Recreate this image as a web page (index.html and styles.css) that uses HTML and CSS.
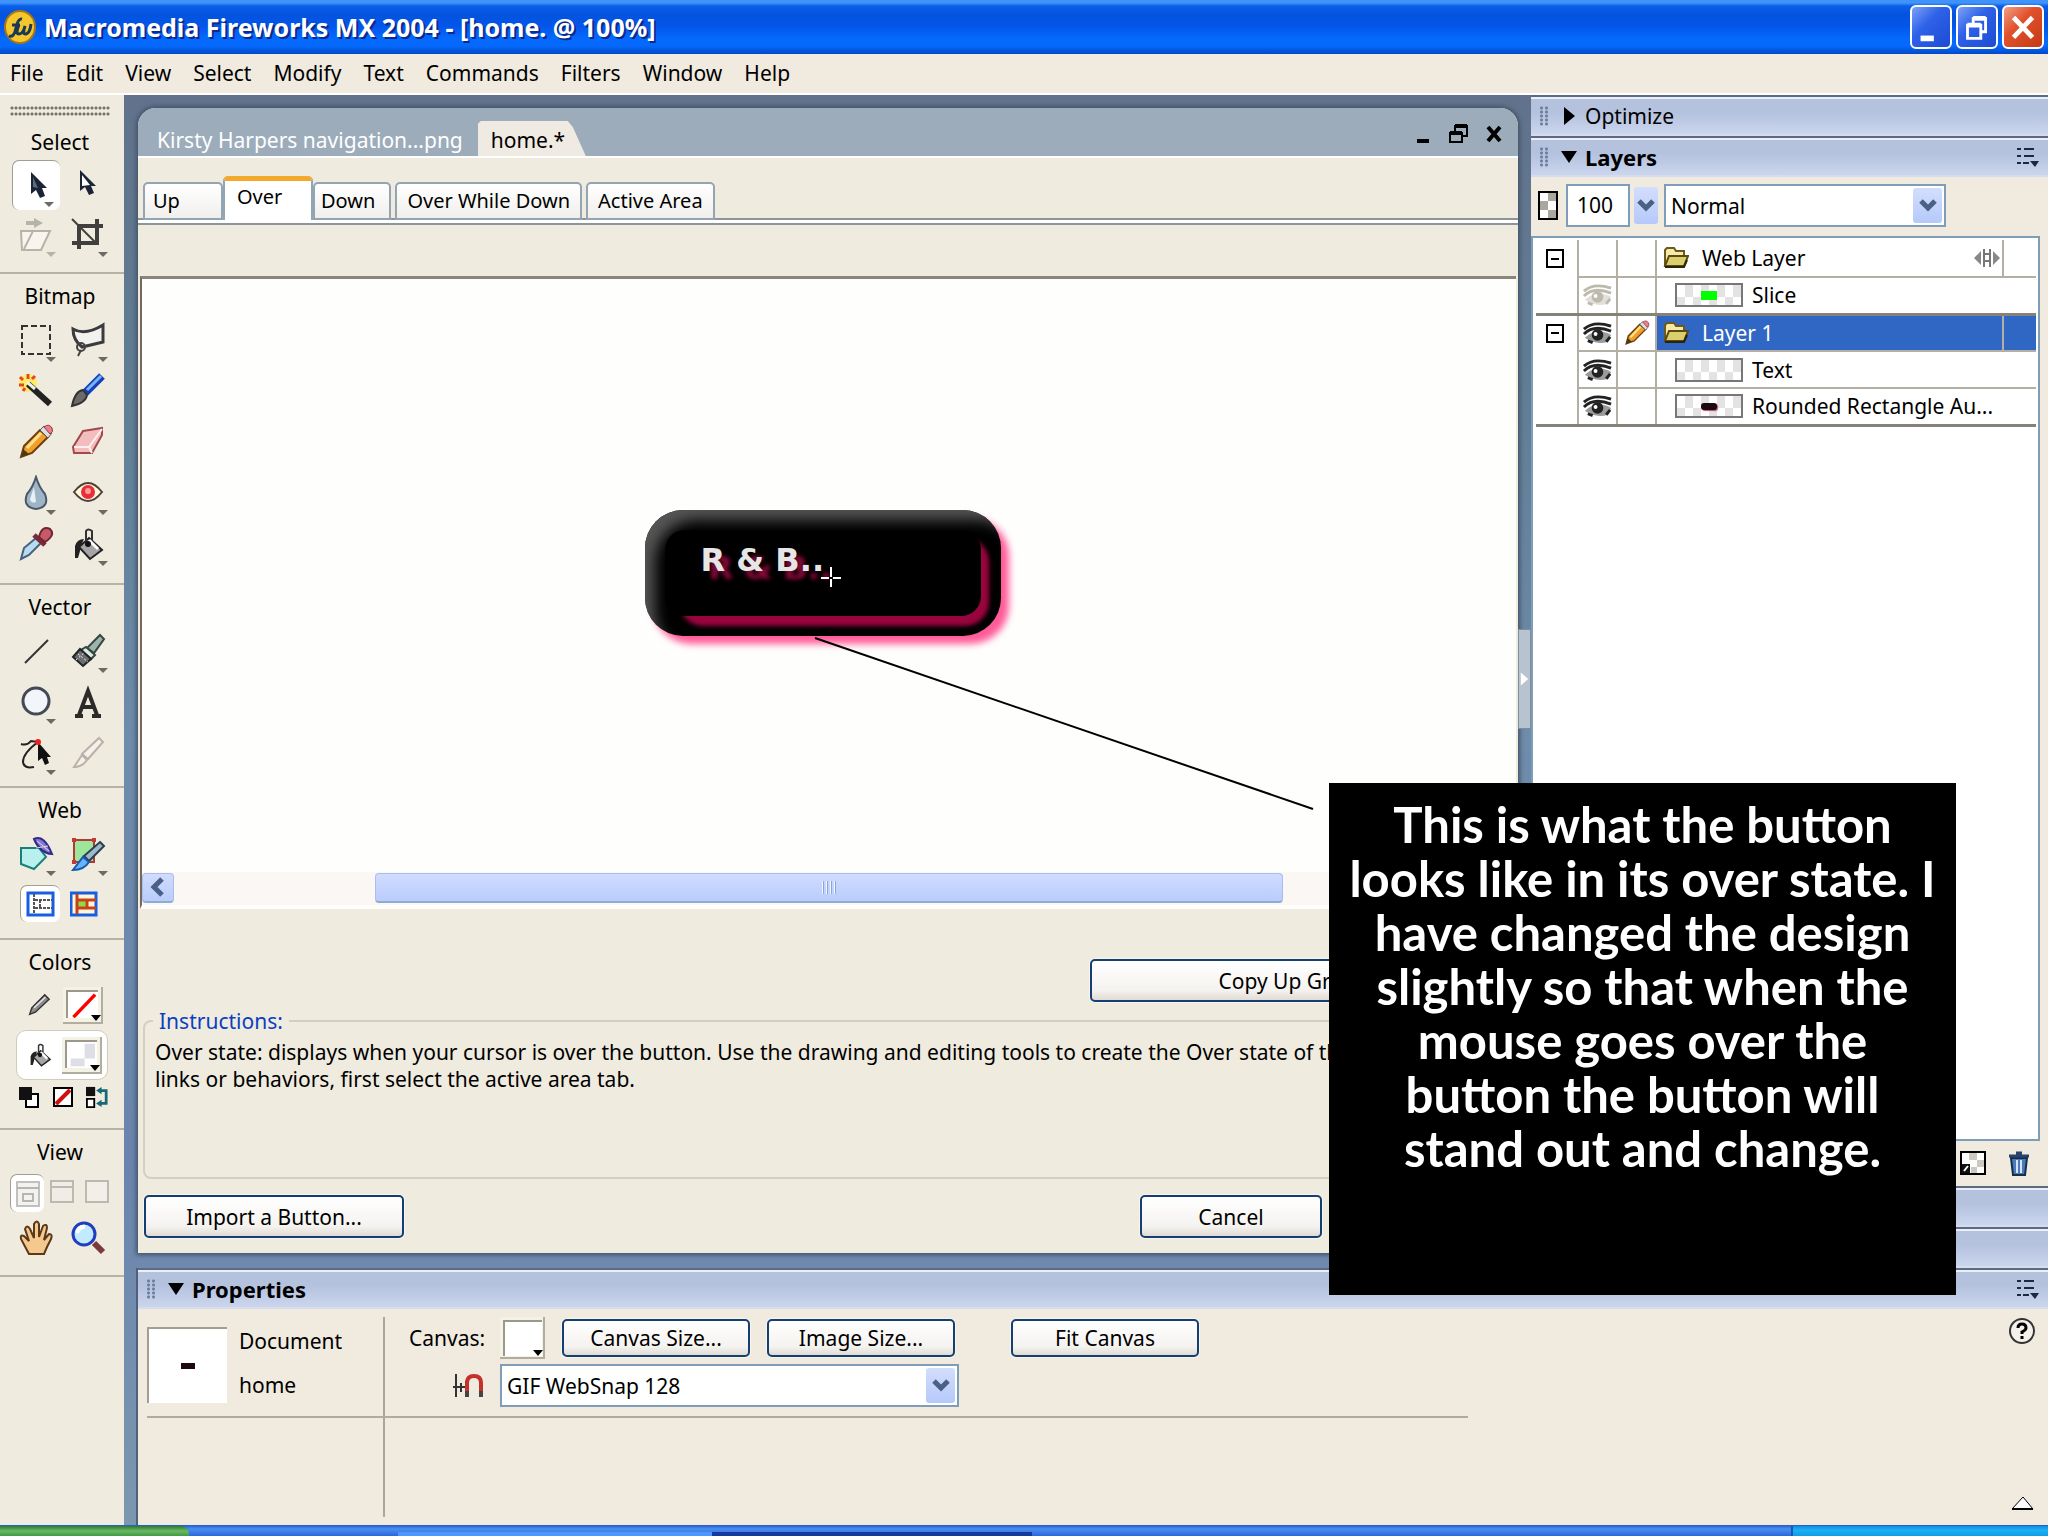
FILE: index.html
```html
<!DOCTYPE html>
<html lang="en">
<head>
    <meta charset="UTF-8">
    <meta name="viewport" content="width=device-width, initial-scale=1.0">
    <title>Macromedia Fireworks MX 2004</title>
    <link rel="stylesheet" href="styles.css">
</head>
<body>
    <!-- shared icons -->
    <svg class="defs" aria-hidden="true">
        <symbol id="chevron" viewBox="0 0 18 14"><path d="M2 2l7 7 7-7" fill="none" stroke="#4a6185" stroke-width="5"/></symbol>
        <symbol id="list-menu" viewBox="0 0 24 22"><path d="M1 3h4M1 10h4M1 17h4M8 3h10M8 10h10M7 17h6" stroke="#1c2740" stroke-width="2"/><path d="M14 15h9l-4 6z" fill="#1c2740"/></symbol>
        <symbol id="folder" viewBox="0 0 26 22"><path d="M2 19V3l2-2h7l2 3h8v5" fill="#f7e9a8" stroke="#6b5a1c" stroke-width="2"/><path d="M2 19L6 9h19l-4 10z" fill="#d9cf6d" stroke="#5d4a12" stroke-width="2"/><path d="M2 20h19l3-7" fill="none" stroke="#2e2208" stroke-width="2"/></symbol>
        <symbol id="eye" viewBox="0 0 32 24"><path d="M2 8Q12-1 30 5M2 13Q12 3 30 10" fill="none" stroke="currentColor" stroke-width="3"/><path d="M3 17Q15 5 30 14l-3 7Q14 25 3 17z" fill="currentColor" opacity=".45"/><circle cx="16" cy="14" r="6" fill="currentColor"/><circle cx="14" cy="13" r="2" fill="#fff"/><path d="M6 20l5 2M25 21l4-5" stroke="currentColor" stroke-width="3"/></symbol>
        <symbol id="pencil" viewBox="0 0 36 36"><path d="M3 33l3-11L22 6l8 7-16 16z" fill="#f0a02a" stroke="#6d3d0c" stroke-width="2"/><path d="M9 24L23 9" stroke="#ffdf8a" stroke-width="3"/><path d="M22 6l4-4 8 7-4 5z" fill="#dedee2" stroke="#555" stroke-width="1"/><path d="M26 3q5-4 8 1 2 4-2 6z" fill="#ee7d8c" stroke="#8c3944"/><path d="M3 33l2-8 6 5z" fill="#4a3a14"/></symbol>
        <symbol id="bucket" viewBox="0 0 36 36"><path d="M5 32V20q2-7 9-7l-3 7q-1 6-3 12z" fill="#222"/><path d="M19 12l13 12-12 9L9 21z" fill="#a5a5a8" stroke="#222" stroke-width="2"/><path d="M19 14l9 9" stroke="#fff" stroke-width="3"/><path d="M16 17V5q2-3 6 0v9" fill="none" stroke="#333" stroke-width="2"/><circle cx="18" cy="18" r="3" fill="#111"/></symbol>
    </svg>

    <header class="titlebar">
        <svg class="app-logo" viewBox="0 0 32 34"><ellipse cx="16" cy="17" rx="15" ry="16" fill="#f5c72f" stroke="#a87712" stroke-width="2"/><path d="M5 26q5 2 7-8t6-9M8 15h8M15 15q-4 9 0 9t6-8q-3 9 1 8t5-10" fill="none" stroke="#1b3a52" stroke-width="3"/></svg>
        <h1>Macromedia Fireworks MX 2004 - [home. @ 100%]</h1>
        <div class="window-buttons">
            <button aria-label="Minimize"><svg viewBox="0 0 40 42"><path d="M9 33h14" stroke="#fff" stroke-width="6"/></svg></button>
            <button aria-label="Restore"><svg viewBox="0 0 40 42"><path d="M10 19h14v14H10zM16 18v-6h13v14h-4" fill="none" stroke="#fff" stroke-width="3"/><path d="M10 19h14M16 12h13" stroke="#fff" stroke-width="5"/></svg></button>
            <button class="close" aria-label="Close"><svg viewBox="0 0 40 42"><path d="M10 11l20 21M30 11L10 32" stroke="#fff" stroke-width="5"/></svg></button>
        </div>
    </header>

    <nav class="menubar">
        <button>File</button>
        <button>Edit</button>
        <button>View</button>
        <button>Select</button>
        <button>Modify</button>
        <button>Text</button>
        <button>Commands</button>
        <button>Filters</button>
        <button>Window</button>
        <button>Help</button>
    </nav>

    <main class="app">
        <aside class="toolbar">
            <section class="tools tools-select">
                <div class="grip-wide"></div>
                <h2>Select</h2>
                <div class="tool-grid">
                    <button class="flyout pressed" aria-label="Pointer"><svg viewBox="0 0 36 36"><path d="M12 4v22l5-4 4 8 5-2-3-8h5z" fill="#1a2436"/><path d="M14 9v10l5 1z" fill="#5b6b7d"/></svg></button>
                    <button aria-label="Subselection"><svg viewBox="0 0 36 36"><path d="M10 3v21l5-4 4 8 5-2-3-7h5z" fill="#1a2436"/><path d="M12 8v11l8-1z" fill="#fff"/></svg></button>
                    <button class="flyout disabled" aria-label="Scale"><svg viewBox="0 0 36 36"><path d="M8 6h10" stroke="#b6b3a9" stroke-width="4"/><path d="M16 1l9 5-9 5z" fill="#b6b3a9"/><path d="M3 14h29l-9 19H4z" fill="#f7f5ee" stroke="#b6b3a9" stroke-width="2"/><path d="M15 14L6 32" stroke="#b6b3a9" stroke-width="2"/></svg></button>
                    <button class="flyout" aria-label="Crop"><svg viewBox="0 0 36 36"><path d="M9 32V9h24M2 26h25V2" fill="none" stroke="#413f3d" stroke-width="4"/><path d="M2 2l23 23" stroke="#413f3d" stroke-width="2"/></svg></button>
                </div>
            </section>
            <section class="tools tools-bitmap">
                <h2>Bitmap</h2>
                <div class="tool-grid">
                    <button class="flyout" aria-label="Marquee"><svg viewBox="0 0 36 36"><path d="M4 4h28v28H4z" fill="none" stroke="#333" stroke-width="2" stroke-dasharray="6 3"/></svg></button>
                    <button class="flyout" aria-label="Lasso"><svg viewBox="0 0 36 36"><path d="M3 7q12 7 30-4v17L12 25Q3 18 3 7z" fill="#f4f2ec" stroke="#3b3b3f" stroke-width="3"/><circle cx="11" cy="25" r="4" fill="none" stroke="#444" stroke-width="2"/><path d="M11 28l-3 6" stroke="#444" stroke-width="2"/></svg></button>
                    <button aria-label="Magic wand"><svg viewBox="0 0 36 36"><circle cx="10" cy="10" r="9" fill="#ffec62"/><path d="M10 1v5M2 4l3 3M1 12h5M5 18l2-3M17 3l-3 3" stroke="#e5452a" stroke-width="3"/><path d="M10 11l22 20" stroke="#222" stroke-width="6"/><path d="M9 9l8 7" stroke="#eee" stroke-width="3"/></svg></button>
                    <button aria-label="Brush"><svg viewBox="0 0 36 36"><path d="M15 20L32 3" stroke="#1740b8" stroke-width="8"/><path d="M17 17L31 3" stroke="#72b5ff" stroke-width="3"/><path d="M2 33q3-15 11-16l4 5q-1 8-15 11z" fill="#6c6a69" stroke="#333" stroke-width="2"/></svg></button>
                    <button aria-label="Pencil"><svg viewBox="0 0 36 36"><use href="#pencil"/></svg></button>
                    <button aria-label="Eraser"><svg viewBox="0 0 36 36"><path d="M13 7l19-3v7L22 29H4l-1-6z" fill="#f3bdbd" stroke="#a04a50" stroke-width="2"/><path d="M4 23h15L32 5M19 23l3 6" fill="none" stroke="#fff0ef" stroke-width="2"/></svg></button>
                    <button class="flyout" aria-label="Blur"><svg viewBox="0 0 36 36"><path d="M18 2q3 10 9 17 5 13-9 15-14-2-9-15 6-7 9-17z" fill="#9fb5c6" stroke="#48586a" stroke-width="2"/><path d="M16 12l-4 12q1 5 6 3z" fill="#e6f0f7"/></svg></button>
                    <button class="flyout" aria-label="Red eye removal"><svg viewBox="0 0 36 36"><path d="M4 17q14-18 28 0-14 18-28 0z" fill="#fff6dc" stroke="#4c403c" stroke-width="2"/><circle cx="18" cy="17" r="7" fill="#e82f38"/><circle cx="18" cy="16" r="3" fill="#ff9ca0"/></svg></button>
                    <button aria-label="Eyedropper"><svg viewBox="0 0 36 36"><path d="M3 33l3-11 12-10 5 5L11 29z" fill="#b7dcf2" stroke="#46627c" stroke-width="2"/><path d="M16 9l11 10" stroke="#7a2a36" stroke-width="5"/><path d="M21 11q3-12 11-8 6 6-5 13z" fill="#c85a68" stroke="#702632" stroke-width="2"/></svg></button>
                    <button class="flyout" aria-label="Paint bucket"><svg viewBox="0 0 36 36"><use href="#bucket"/></svg></button>
                </div>
            </section>
            <section class="tools">
                <h2>Vector</h2>
                <div class="tool-grid">
                    <button aria-label="Line"><svg viewBox="0 0 36 36"><path d="M7 30L30 7" stroke="#333" stroke-width="2"/></svg></button>
                    <button class="flyout" aria-label="Pen"><svg viewBox="0 0 36 36"><path d="M30 2l4 4-10 14-7-5z" fill="#9bb5ae" stroke="#36473f" stroke-width="2"/><path d="M16 14l9 8-4 4-10-9z" fill="#dcebe5" stroke="#36473f" stroke-width="2"/><path d="M10 16l11 10-8 7L3 24z" fill="#696e70" stroke="#222" stroke-width="2"/><path d="M8 21l10 8M6 27l8-7" stroke="#eee" stroke-dasharray="2 2"/></svg></button>
                    <button class="flyout" aria-label="Ellipse"><svg viewBox="0 0 36 36"><circle cx="18" cy="17" r="13" fill="#f2f5f9" stroke="#424952" stroke-width="3"/></svg></button>
                    <button aria-label="Text"><svg viewBox="0 0 36 36"><path d="M5 32h8M22 32h9M9 31l9-24 9 24M13 23h10" fill="none" stroke="#2d2b2a" stroke-width="4"/></svg></button>
                    <button class="flyout" aria-label="Freeform"><svg viewBox="0 0 36 36"><path d="M3 9q6 2 10-3l7 1Q5 18 5 27q1 7 11 5" fill="none" stroke="#222" stroke-width="2"/><path d="M20 7v19l4-3 3 7 4-2-2-6h4z" fill="#111"/><circle cx="20" cy="7" r="3" fill="#f02020"/></svg></button>
                    <button class="disabled" aria-label="Knife"><svg viewBox="0 0 36 36"><path d="M29 3l4 4-15 17-6-5zM12 20l5 5q-5 7-13 7z" fill="#f5f1ea" stroke="#b8b2a8" stroke-width="2"/></svg></button>
                </div>
            </section>
            <section class="tools tools-web">
                <h2>Web</h2>
                <div class="tool-grid">
                    <button class="flyout" aria-label="Hotspot"><svg viewBox="0 0 36 36"><path d="M3 12h18l7 9-12 12L3 28z" fill="#b9f0ee" stroke="#18807c" stroke-width="2"/><path d="M16 3q10-5 18 15-12-1-18-15z" fill="#8478d8" stroke="#342a8a" stroke-width="2"/><path d="M19 5l12 10M18 12l12-2" stroke="#ddd" stroke-width="1"/></svg></button>
                    <button class="flyout" aria-label="Slice"><svg viewBox="0 0 36 36"><path d="M4 4h20v22H4z" fill="#9ee69b" stroke="#b03a34" stroke-width="2"/><path d="M2 2h4v4H2zM22 2h4v4h-4zM2 24h4v4H2z" fill="#c03a34"/><path d="M30 6l4 4-15 15-5-5z" fill="#9db8c8" stroke="#29404f" stroke-width="2"/><path d="M13 21l6 5q-5 8-16 8z" fill="#66b4ff" stroke="#1759b0" stroke-width="2"/></svg></button>
                    <button class="pressed small" aria-label="Hide slices"><svg viewBox="0 0 36 36"><path d="M5 7h25v22H5z" fill="#fff" stroke="#175ee0" stroke-width="3"/><path d="M11 8v20M12 14h18M12 22h18M17 14v8" fill="none" stroke="#555" stroke-width="2" stroke-dasharray="3 1"/></svg></button>
                    <button aria-label="Show slices"><svg viewBox="0 0 36 36"><path d="M1 6h25v22H1z" fill="#fff6d8" stroke="#175ee0" stroke-width="3"/><path d="M7 13h10v8H7z" fill="#8de044"/><path d="M7 7v20M8 13h18M8 21h18M17 13v8" fill="none" stroke="#c8401c" stroke-width="3"/></svg></button>
                </div>
            </section>
            <section class="tools tools-colors">
                <h2>Colors</h2>
                <div class="color-row">
                    <svg class="color-icon" viewBox="0 0 36 36"><path d="M5 31l3-9L26 4l6 6-19 18z" fill="#8c8c8c" stroke="#333" stroke-width="2"/><path d="M11 22L27 7" stroke="#e6e6e6" stroke-width="2"/></svg>
                    <button class="swatch" aria-label="Stroke color"><svg viewBox="0 0 30 30"><path d="M4 29L29 3" stroke="#f00" stroke-width="4"/></svg></button>
                </div>
                <div class="color-row active">
                    <svg class="color-icon" viewBox="0 0 36 36"><use href="#bucket"/></svg>
                    <button class="swatch" aria-label="Fill color"><svg viewBox="0 0 30 30"><path d="M18 2h12v17H18zM2 19h16v9H2z" fill="#dedee6"/></svg></button>
                </div>
                <div class="mini-row">
                    <button aria-label="Default colors"><svg viewBox="0 0 20 22"><path d="M7 8h12v13H7z" fill="#fff" stroke="#000" stroke-width="2"/><path d="M0 1h13v13H0z" fill="#111"/></svg></button>
                    <button aria-label="No color"><svg viewBox="0 0 20 22"><path d="M1 2h18v18H1z" fill="#fff" stroke="#000" stroke-width="2"/><path d="M3 18L17 4" stroke="#d01010" stroke-width="4"/></svg></button>
                    <button aria-label="Swap colors"><svg viewBox="0 0 24 24"><path d="M0 1h10v10H0z" fill="#111"/><path d="M1 14h8v9H1z" fill="#fff" stroke="#000" stroke-width="2"/><path d="M14 5h8v14h-8" fill="none" stroke="#176878" stroke-width="3"/><path d="M11 5l6-4v8zM11 19l6-4v8z" fill="#176878"/></svg></button>
                </div>
            </section>
            <section class="tools tools-view">
                <h2>View</h2>
                <div class="mini-row view-modes">
                    <button class="pressed" aria-label="Standard screen"><svg viewBox="0 0 26 28"><path d="M2 2h22v24H2z" fill="#f3f2f0" stroke="#c2c0bb" stroke-width="2"/><path d="M2 8h22M8 14h10v7H8z" fill="none" stroke="#b7b5b0" stroke-width="2"/></svg></button>
                    <button aria-label="Full screen with menus"><svg viewBox="0 0 26 28"><path d="M2 2h22v21H2zM2 8h22" fill="#f0ece6" stroke="#bdb9b2" stroke-width="2"/></svg></button>
                    <button aria-label="Full screen"><svg viewBox="0 0 26 28"><path d="M2 2h22v21H2z" fill="#f3eee8" stroke="#bdb9b2" stroke-width="2"/></svg></button>
                </div>
                <div class="tool-grid">
                    <button aria-label="Hand"><svg viewBox="0 0 36 36"><path d="M11 34l-8-15q-1-5 3-3l5 5-4-12q2-5 5 0l4 9V4q3-5 5 0v13l4-11q4-3 4 2l-3 12 5-6q4 0 2 5l-4 8-3 7z" fill="#f5c890" stroke="#5a3818" stroke-width="2"/></svg></button>
                    <button aria-label="Zoom"><svg viewBox="0 0 36 36"><path d="M24 23l9 9" stroke="#7b3a3c" stroke-width="6"/><circle cx="14" cy="14" r="11" fill="#c3eaff" stroke="#203fc0" stroke-width="3"/><path d="M7 13q2-7 8-6" fill="none" stroke="#fff" stroke-width="4"/></svg></button>
                </div>
            </section>
        </aside>

        <div class="stage">
            <div class="workspace">
                <article class="document">
                    <div class="doc-tabs">
                        <button class="doc-tab">Kirsty Harpers navigation...png</button>
                        <button class="doc-tab current">home.*</button>
                        <div class="doc-buttons">
                            <button aria-label="Minimize document"><svg viewBox="0 0 22 22"><path d="M4 18h12" stroke="#000" stroke-width="4"/></svg></button>
                            <button aria-label="Restore document"><svg viewBox="0 0 22 22"><path d="M2 10h12v9H2zM7 9V3h12v10h-4" fill="none" stroke="#000" stroke-width="2"/><path d="M2 10h12M7 3h12" stroke="#000" stroke-width="4"/></svg></button>
                            <button aria-label="Close document"><svg viewBox="0 0 22 22"><path d="M5 4l12 14M17 4L5 18" stroke="#000" stroke-width="4"/></svg></button>
                        </div>
                    </div>
                    <div class="state-tabs">
                        <button>Up</button>
                        <button class="current">Over</button>
                        <button>Down</button>
                        <button>Over While Down</button>
                        <button>Active Area</button>
                    </div>
                    <div class="canvas">
                        <div class="nav-button">
                            <span>R &amp; B..</span>
                            <svg class="crosshair" viewBox="0 0 20 20"><path d="M10 0v20M0 11h20" stroke="#fff" stroke-width="2"/><path d="M8 11h4" stroke="#000" stroke-width="2"/></svg>
                        </div>
                    </div>
                    <div class="scrollbar">
                        <button class="scroll-arrow" aria-label="Scroll left"><svg viewBox="0 0 20 24"><path d="M14 4L6 12l8 8" fill="none" stroke="#4a6185" stroke-width="5"/></svg></button>
                        <div class="scroll-thumb"><i></i><i></i><i></i><i></i></div>
                    </div>
                    <div class="copy-row"><button class="xp-button">Copy Up Graphic</button></div>
                    <fieldset class="instructions">
                        <legend>Instructions:</legend>
                        <p>Over state: displays when your cursor is over the button. Use the drawing and editing tools to create the Over state of the button. To add<br>links or behaviors, first select the active area tab.</p>
                    </fieldset>
                    <div class="doc-actions">
                        <button class="xp-button">Import a Button...</button>
                        <button class="xp-button cancel">Cancel</button>
                    </div>
                </article>

                <button class="splitter" aria-label="Collapse panels"><svg viewBox="0 0 12 20"><path d="M2 3l8 7-8 7z" fill="#fff"/></svg></button>

                <aside class="panels">
                    <div class="panel-header">
                        <span class="grip"></span>
                        <svg class="arrow" viewBox="0 0 16 18"><path d="M3 0l11 9-11 9z"/></svg>
                        <h2 class="closed">Optimize</h2>
                    </div>
                    <div class="panel-header">
                        <span class="grip"></span>
                        <svg class="arrow" viewBox="0 0 16 18"><path d="M0 3h16L8 15z"/></svg>
                        <h2>Layers</h2>
                        <button class="menu-icon" aria-label="Layers options"><svg viewBox="0 0 24 22"><use href="#list-menu"/></svg></button>
                    </div>
                    <div class="layer-options">
                        <svg class="opacity-icon" viewBox="0 0 20 29"><path d="M1 1h18v27H1z" fill="#fff"/><path d="M10 2h8v8h-8zM2 10h8v9H2zM10 19h8v8h-8z" fill="#aaa79d"/><path d="M1 1h18v27H1z" fill="none" stroke="#000" stroke-width="2"/></svg>
                        <input type="text" class="opacity" value="100" aria-label="Opacity">
                        <button class="chevron-button" aria-label="Opacity slider"><svg viewBox="0 0 18 14"><use href="#chevron"/></svg></button>
                        <div class="select blend">
                            <select aria-label="Blend mode"><option>Normal</option></select>
                            <span class="select-arrow"><svg viewBox="0 0 18 14"><use href="#chevron"/></svg></span>
                        </div>
                    </div>
                    <div class="layer-list">
                        <table>
                            <colgroup><col class="c-toggle"><col class="c-eye"><col class="c-eye"><col><col class="c-end"></colgroup>
                            <tr>
                                <td><button class="toggle" aria-label="Collapse Web Layer"></button></td>
                                <td></td>
                                <td></td>
                                <td class="layer-name"><div><svg class="folder" viewBox="0 0 26 22"><use href="#folder"/></svg>Web Layer<svg class="share" viewBox="0 0 26 20"><path d="M7 3L0 10l7 7zM19 3l7 7-7 7z" fill="#888"/><path d="M10 1v18M16 1v18M10 6h6M10 13h6" stroke="#777" stroke-width="2"/></svg></div></td>
                                <td></td>
                            </tr>
                            <tr class="layer-end">
                                <td></td>
                                <td class="eye hidden-layer"><svg viewBox="0 0 32 24"><use href="#eye"/></svg></td>
                                <td></td>
                                <td class="object-name" colspan="2"><div><span class="thumb"><i class="green"></i></span>Slice</div></td>
                            </tr>
                            <tr class="selected">
                                <td><button class="toggle" aria-label="Collapse Layer 1"></button></td>
                                <td class="eye"><svg viewBox="0 0 32 24"><use href="#eye"/></svg></td>
                                <td class="pen"><svg viewBox="0 0 36 36"><use href="#pencil"/></svg></td>
                                <td class="layer-name"><div><svg class="folder" viewBox="0 0 26 22"><use href="#folder"/></svg>Layer 1</div></td>
                                <td></td>
                            </tr>
                            <tr>
                                <td></td>
                                <td class="eye"><svg viewBox="0 0 32 24"><use href="#eye"/></svg></td>
                                <td></td>
                                <td class="object-name" colspan="2"><div><span class="thumb"></span>Text</div></td>
                            </tr>
                            <tr class="layer-end">
                                <td></td>
                                <td class="eye"><svg viewBox="0 0 32 24"><use href="#eye"/></svg></td>
                                <td></td>
                                <td class="object-name" colspan="2"><div><span class="thumb"><i class="dark"></i></span>Rounded Rectangle Au...</div></td>
                            </tr>
                        </table>
                    </div>
                    <div class="layer-footer">
                        <button aria-label="New bitmap image"><svg viewBox="0 0 26 26"><path d="M1 2h24v22H1z" fill="#fff" stroke="#000" stroke-width="2"/><path d="M9 3h8v7H9zM17 10h7v7h-7zM11 17h6v6h-6z" fill="#ccc9c0"/><path d="M2 14h8v9H2z" fill="#111"/><path d="M4 21l4-5" stroke="#fff" stroke-width="2"/></svg></button>
                        <button aria-label="Delete selection"><svg viewBox="0 0 26 26"><path d="M5 8h16l-2 17H7z" fill="#4a7ab8" stroke="#182c4c" stroke-width="2"/><path d="M11 10v13M15 10v13" stroke="#d4e4f5" stroke-width="2"/><path d="M3 6h20M10 3h6" stroke="#28446c" stroke-width="3"/></svg></button>
                    </div>
                    <div class="panel-header"></div>
                    <div class="panel-header"></div>
                </aside>

                <!-- callout on top of the screen -->
                <svg class="callout-line" viewBox="0 0 500 174"><path d="M1 1l498 171" stroke="#000" stroke-width="2"/></svg>
                <div class="callout">
                    <p>This is what the button<br>looks like in its over state. I<br>have changed the design<br>slightly so that when the<br>mouse goes over the<br>button the button will<br>stand out and change.</p>
                </div>
            </div>

            <section class="properties">
                <div class="panel-header">
                    <span class="grip"></span>
                    <svg class="arrow" viewBox="0 0 16 18"><path d="M0 3h16L8 15z"/></svg>
                    <h2>Properties</h2>
                    <button class="menu-icon" aria-label="Properties options"><svg viewBox="0 0 24 22"><use href="#list-menu"/></svg></button>
                </div>
                <div class="properties-body">
                    <div class="doc-info">
                        <div class="doc-thumb"><i></i></div>
                        <div class="doc-labels">
                            <span>Document</span>
                            <span>home</span>
                        </div>
                    </div>
                    <div class="doc-settings">
                        <span class="row-label">Canvas:</span>
                        <div class="settings-row">
                            <button class="swatch canvas-swatch" aria-label="Canvas color"></button>
                            <button class="xp-button">Canvas Size...</button>
                            <button class="xp-button">Image Size...</button>
                            <button class="xp-button fit">Fit Canvas</button>
                        </div>
                        <label class="row-label" for="preset" aria-label="Export preset"><svg viewBox="0 0 32 24"><path d="M3 0v23M0 13h16M8 9v9M13 7v11" stroke="#333" stroke-width="2"/><path d="M14 21V9q0-7 7-7t7 7v12" fill="none" stroke="#c4302b" stroke-width="4"/><path d="M14 17v6M28 17v6" stroke="#444" stroke-width="4"/></svg></label>
                        <div class="select preset">
                            <select id="preset"><option>GIF WebSnap 128</option></select>
                            <span class="select-arrow"><svg viewBox="0 0 18 14"><use href="#chevron"/></svg></span>
                        </div>
                    </div>
                    <div class="properties-side">
                        <button aria-label="Help"><svg viewBox="0 0 28 28"><circle cx="14" cy="14" r="12" fill="#f4f1ec" stroke="#333" stroke-width="2"/><path d="M10 11q0-4 4-4t4 4q0 2-4 4v2M14 19v3" fill="none" stroke="#000" stroke-width="3"/></svg></button>
                        <button aria-label="Collapse"><svg viewBox="0 0 28 28"><path d="M4 20L15 8l10 12z" fill="#fff" stroke="#000" stroke-width="1"/><path d="M4 20h21" stroke="#000" stroke-width="2"/></svg></button>
                    </div>
                    <hr>
                </div>
            </section>
        </div>
    </main>

    <footer class="taskbar">
        <div class="start"></div>
        <div class="task"></div>
        <div class="task active-task"></div>
        <div class="tray"></div>
    </footer>
</body>
</html>
```
FILE: styles.css
```css
* {
    box-sizing: border-box;
}

body {
    margin: 0;
    min-height: 100vh;
    display: flex;
    flex-direction: column;
    background: #efebdf;
    color: #000;
    font-family: 'Noto Sans', Tahoma, sans-serif;
    font-size: 21px;
    line-height: 28px;
}

h1, h2, p {
    margin: 0;
}

button {
    padding: 0;
    border: 0;
    background: none;
    color: inherit;
    font: inherit;
}

svg {
    display: block;
    flex: none;
}

.defs {
    position: absolute;
    width: 0;
    height: 0;
}

/* title bar */

.titlebar {
    height: 54px;
    flex: none;
    display: flex;
    align-items: center;
    padding: 0 4px;
    background: linear-gradient(#3f93fb 0, #3f93fb 3px, #0a5fe8 6px, #0453df 14px, #0455ea 26px, #0469fc 38px, #0469fc 46px, #0348c8 54px);
}

.app-logo {
    width: 32px;
    height: 34px;
}

.titlebar h1 {
    flex: 1;
    padding-left: 8px;
    color: #fff;
    font-size: 25px;
    line-height: 32px;
    text-shadow: 2px 2px 0 #0c2a8c;
}

.window-buttons {
    display: flex;
    gap: 4px;
}

.window-buttons button {
    width: 42px;
    height: 44px;
    border: 2px solid #fff;
    border-radius: 6px;
    background: linear-gradient(135deg, #7da2f8, #2e62e8 40%, #1c4bd2);
}

.window-buttons .close {
    background: linear-gradient(135deg, #f0a088, #e2512c 40%, #c23a14);
}

.window-buttons svg {
    width: 38px;
    height: 40px;
}

/* menu */

.menubar {
    height: 41px;
    flex: none;
    display: flex;
    align-items: center;
    gap: 22px;
    padding: 0 10px 2px;
    background: #f0eadf;
    border-bottom: 2px solid #fff;
}

.app {
    flex: 1;
    display: flex;
}

/* tools */

.toolbar {
    width: 124px;
    flex: none;
    background: #efebde;
}

.tools {
    padding: 8px 10px;
    border-bottom: 2px solid #b7b3a2;
}

.tools h2 {
    margin: 0 4px 4px 0;
    font-size: 21px;
    font-weight: normal;
    text-align: center;
}

.tools-select {
    padding-bottom: 12px;
}

.tools-bitmap {
    padding-bottom: 14px;
}

.grip-wide {
    height: 11px;
    margin: 2px 4px 12px 0;
    background: radial-gradient(circle, #77746b 1px, transparent 2px) 0 0 / 4px 6px;
}

.tool-grid {
    display: grid;
    grid-template-columns: 52px 52px;
    grid-auto-rows: 51px;
}

.tools-select .tool-grid {
    grid-auto-rows: 50px;
}

.tool-grid button {
    position: relative;
    display: grid;
    place-items: center;
}

.tool-grid svg {
    width: 36px;
    height: 36px;
}

.flyout::after {
    content: "";
    position: absolute;
    right: 6px;
    bottom: 3px;
    border: 5px solid transparent;
    border-top-color: #6e6a62;
    border-bottom: 0;
}

.flyout.disabled::after {
    border-top-color: #b8b4aa;
}

.pressed {
    background: #fff;
    border-radius: 7px;
    border-left: 1px solid #a29e92;
    border-top: 1px solid #a29e92;
}

.tool-grid .pressed {
    margin: 0 2px;
}

.tool-grid .small {
    margin: 6px 2px 8px 10px;
}

.tools-colors {
    padding-bottom: 20px;
}

.color-row {
    height: 50px;
    display: flex;
    align-items: center;
    justify-content: space-between;
    margin: 0 6px;
    padding: 0 5px 0 10px;
}

.color-row.active {
    background: #fff;
    border: 1px solid #cfcbbd;
    border-radius: 10px;
}

.color-icon {
    width: 26px;
    height: 30px;
}

.swatch {
    position: relative;
    width: 40px;
    height: 37px;
    padding: 3px;
    background: #f4f1e5;
    border-right: 2px solid #b2ae9f;
    border-bottom: 2px solid #b2ae9f;
}

.swatch svg,
.canvas-swatch::before {
    width: 32px;
    height: 28px;
    background: #fff;
    border-left: 2px solid #9c988c;
    border-top: 2px solid #9c988c;
}

.swatch::after {
    content: "";
    position: absolute;
    right: 0;
    bottom: 1px;
    border: 5px solid transparent;
    border-top: 6px solid #000;
    border-bottom: 0;
}

.mini-row {
    display: flex;
    justify-content: space-between;
    margin: 6px 6px 0 8px;
}

.mini-row svg {
    width: 22px;
    height: 22px;
}

.tools-view {
    padding-bottom: 12px;
}

.view-modes {
    height: 38px;
    margin: 8px 0 0;
}

.view-modes button {
    width: 34px;
    display: grid;
    place-items: center;
}

.view-modes svg {
    width: 26px;
    height: 28px;
}

/* document window */

.stage {
    flex: 1;
    min-width: 0;
    display: flex;
    flex-direction: column;
    background: linear-gradient(#62728c, #5f7d93 20%, #6e8cab 45%, #6a84ad 75%, #7a98ae);
}

.workspace {
    position: relative;
    flex: 1;
    display: flex;
}

.document {
    flex: 1;
    min-width: 0;
    display: flex;
    flex-direction: column;
    margin: 13px 0 15px 14px;
    background: #efebdf;
    border-radius: 18px 18px 0 0;
    box-shadow: 0 0 4px 2px #44546a;
}

.doc-tabs {
    height: 50px;
    display: flex;
    align-items: flex-end;
    background: #9cacbb;
    border-bottom: 2px solid #fff;
    border-radius: 18px 18px 0 0;
}

.doc-tab {
    height: 35px;
    padding: 3px 15px 0 19px;
    color: #fff;
}

.doc-tab.current {
    width: 108px;
    padding: 3px 0 0 13px;
    color: #000;
    text-align: left;
    background: #f0ebe2;
    clip-path: polygon(0 3px, 3px 0, 90px 0, 95px 6px, 108px 100%, 0 100%);
}

.doc-buttons {
    display: flex;
    gap: 13px;
    margin: 0 13px 11px auto;
}

.doc-buttons svg {
    width: 22px;
    height: 22px;
}

.state-tabs {
    display: flex;
    align-items: flex-end;
    height: 67px;
    padding: 0 5px 5px;
    font-size: 20px;
    background: linear-gradient(transparent 60px, #8e9597 60px, #8e9597 62px, #fff 62px, #fff 65px, #8e9597 65px);
}

.state-tabs button {
    height: 38px;
    padding: 0 10px;
    margin-right: 4px;
    background: linear-gradient(#fff, #f1efec);
    border: 2px solid #93a5b3;
    border-radius: 5px 5px 0 0;
}

.state-tabs button:first-child {
    width: 80px;
    margin-right: 0;
    padding-left: 8px;
    text-align: left;
}

.state-tabs .current {
    width: 90px;
    height: 44px;
    margin-right: 0;
    padding: 0 0 8px 12px;
    text-align: left;
    background: #fff;
    border-top: 5px solid #f3a92b;
    border-bottom: 0;
}

.state-tabs .current + button {
    padding: 0 14px 0 6px;
}

.canvas {
    flex: 1;
    display: grid;
    place-items: center;
    margin: 51px 2px 0;
    padding: 0 13px 5px 0;
    background: #fefefd;
    border-top: 3px solid #8a857b;
    border-left: 2px solid #75685c;
}

.nav-button {
    position: relative;
    z-index: 0;
    width: 356px;
    height: 126px;
    padding: 28px 56px;
    border-radius: 38px;
    color: #e6e6e6;
    font-family: 'DejaVu Sans', sans-serif;
    font-size: 32px;
    font-weight: bold;
    line-height: 44px;
    text-shadow: 8px 8px 4px #8c0a3c;
    background: #000;
    box-shadow: inset 14px 14px 14px -4px #555, 8px 8px 7px #ff5c98;
}

/* pink bevel behind the black face */
.nav-button::before,
.nav-button::after {
    content: "";
    position: absolute;
    z-index: -1;
}

.nav-button::before {
    inset: 28px 12px 10px 34px;
    border-radius: 24px;
    background: #98043d;
    filter: blur(2px);
}

.nav-button::after {
    inset: 20px;
    border-radius: 20px;
    background: #000;
}

.nav-button .crosshair {
    position: absolute;
    left: 176px;
    top: 57px;
    width: 20px;
    height: 20px;
}

.scrollbar {
    display: flex;
    align-items: center;
    height: 37px;
    margin: 0 2px;
    padding-bottom: 2px;
    background: #faf7f4;
    border-left: 2px solid #75685c;
    border-bottom: 4px solid #fff;
}

.scroll-arrow,
.scroll-thumb {
    height: 30px;
    background: linear-gradient(#d0dcff, #b9ccfb);
    border: 1px solid #a8bfee;
    border-bottom: 2px solid #8eaccc;
    border-radius: 4px;
}

.scroll-arrow {
    width: 32px;
    padding-left: 5px;
}

.scroll-arrow svg {
    width: 20px;
    height: 24px;
}

.scroll-thumb {
    width: 908px;
    margin-left: 201px;
    display: flex;
    align-items: center;
    justify-content: center;
    gap: 2px;
}

.scroll-thumb i {
    width: 2px;
    height: 13px;
    background: #f2f6ff;
    border-right: 1px solid #8ba5dc;
}

.xp-button {
    height: 43px;
    background: linear-gradient(#fff, #f5f3f0 75%, #e0dcd4);
    border: 2px solid #153f70;
    border-radius: 5px;
    box-shadow: 0 0 0 1px #f7f5ef;
}

.copy-row {
    display: flex;
    justify-content: flex-end;
    padding: 50px 6px 5px;
}

.copy-row .xp-button {
    width: 422px;
}

.instructions {
    min-width: 0;
    height: 172px;
    margin: 0 5px;
    padding: 4px 10px;
    border: 2px solid #d4d0bf;
    border-radius: 8px;
}

.instructions legend {
    margin-left: -2px;
    padding: 0 6px;
    color: #0b3fc0;
}

.instructions p {
    line-height: 27px;
    white-space: nowrap;
}

.doc-actions {
    display: flex;
    justify-content: space-between;
    padding: 16px 196px 15px 6px;
}

.doc-actions .xp-button {
    width: 260px;
}

.doc-actions .cancel {
    width: 182px;
}

.splitter {
    width: 13px;
    height: 100px;
    flex: none;
    margin-top: 534px;
    background: #b8c3d0;
    border: 1px solid #7f8c9c;
}

.splitter svg {
    width: 11px;
    height: 20px;
}

/* panels */

.panels {
    width: 517px;
    flex: none;
    display: flex;
    flex-direction: column;
    background: #f0eadf;
}

.panel-header {
    height: 41px;
    flex: none;
    display: flex;
    align-items: center;
    padding: 0 8px 2px;
    background: linear-gradient(#b5c2de 40%, #cdd8ef);
    border-top: 2px solid #5c6b84;
    box-shadow: inset 0 2px #e9eef8, inset 0 -2px #d5dcec;
}

.panel-header h2 {
    padding-left: 8px;
    font-size: 22px;
}

.panel-header .closed {
    font-size: 21px;
    font-weight: normal;
}

.grip {
    width: 10px;
    height: 20px;
    background: radial-gradient(circle, #6d7d9c 1px, transparent 2px) 0 0 / 5px 4px;
}

.arrow {
    width: 16px;
    height: 18px;
    margin-left: 12px;
}

.menu-icon {
    margin-left: auto;
}

.menu-icon svg {
    width: 24px;
    height: 22px;
}

.layer-options {
    display: flex;
    align-items: center;
    padding: 7px 7px 9px;
}

.opacity-icon {
    width: 20px;
    height: 29px;
}

.opacity {
    width: 64px;
    height: 43px;
    margin: 0 4px 0 8px;
    padding: 0 0 2px 9px;
    border: 2px solid #7f9db9;
    background: #fff;
    font: inherit;
}

.chevron-button,
.select-arrow {
    display: grid;
    place-items: center;
    background: linear-gradient(#d3defd, #b5c9f9);
    border-radius: 3px;
}

.chevron-button {
    width: 24px;
    height: 37px;
    margin-right: 6px;
}

.chevron-button svg,
.select-arrow svg {
    width: 18px;
    height: 14px;
}

.select {
    position: relative;
}

.select select {
    width: 100%;
    height: 43px;
    padding: 0 5px;
    appearance: none;
    background: #fff;
    border: 2px solid #7f9db9;
    border-radius: 0;
    color: #000;
    font: inherit;
}

.select-arrow {
    position: absolute;
    top: 4px;
    right: 4px;
    bottom: 4px;
    width: 29px;
    pointer-events: none;
}

.blend {
    width: 282px;
}

.layer-list {
    flex: 1;
    margin-right: 8px;
    padding: 2px 2px 2px 3px;
    background: #fff;
    border: 2px solid #7f9db9;
}

.layer-list table {
    width: 100%;
    table-layout: fixed;
    border-collapse: collapse;
}

.layer-list td {
    height: 37px;
    padding: 0;
    border-left: 2px solid #b3afa4;
    border-bottom: 2px solid #b3afa4;
}

.layer-list td:first-child {
    border-left: 0;
    border-bottom: 0;
}

.layer-list .layer-end td {
    border-bottom: 3px solid #85827a;
}

.c-toggle {
    width: 42px;
}

.c-eye {
    width: 39px;
}

.c-end {
    width: 33px;
}

.toggle {
    display: block;
    width: 18px;
    height: 19px;
    margin-left: 10px;
    border: 2px solid #000;
    background: linear-gradient(#000, #000) center / 8px 2px no-repeat;
}

.layer-name div,
.object-name div {
    display: flex;
    align-items: center;
}

.layer-name div {
    padding: 0 2px 0 6px;
}

.object-name div {
    padding-left: 18px;
}

.folder {
    width: 26px;
    height: 22px;
    margin-right: 13px;
}

.share {
    width: 26px;
    height: 20px;
    margin-left: auto;
}

.selected td:nth-child(n+4) {
    background: #3167c4;
    color: #fff;
}

.eye svg {
    width: 31px;
    height: 24px;
    margin-left: 3px;
    color: #222;
}

.hidden-layer svg {
    color: #bdbaad;
}

.pen svg {
    width: 26px;
    height: 30px;
    margin-left: 6px;
}

.thumb {
    width: 68px;
    height: 24px;
    display: grid;
    place-items: center;
    margin-right: 9px;
    border: 2px solid #777;
    background: repeating-conic-gradient(#e4e2e2 0 25%, #fff 0 50%) 0 0 / 16px 24px;
}

.thumb i {
    width: 16px;
    height: 9px;
}

.thumb .green {
    background: #0f0;
}

.thumb .dark {
    height: 7px;
    background: #1c0a10;
    border-radius: 3px;
    box-shadow: 1px 1px 1px #c04a70;
}

.layer-footer {
    display: flex;
    justify-content: flex-end;
    gap: 20px;
    padding: 9px 16px 10px 0;
}

.layer-footer svg {
    width: 26px;
    height: 26px;
}

/* callout */

.callout {
    position: absolute;
    left: 1205px;
    top: 688px;
    width: 627px;
    height: 512px;
    padding-top: 14px;
    background: #000;
    color: #fff;
    font-family: Lato, sans-serif;
    font-size: 49px;
    font-weight: bold;
    line-height: 54px;
    text-align: center;
    z-index: 1;
}

.callout-line {
    position: absolute;
    left: 690px;
    top: 542px;
    width: 500px;
    height: 174px;
}

/* properties */

.properties {
    flex: none;
    margin-left: 14px;
    background: #f0eadf;
    box-shadow: -2px 0 #4f6078;
}

.properties-body {
    display: grid;
    grid-template-columns: 236px 1fr auto;
    grid-template-rows: 99px 101px;
    padding: 8px 12px 8px 9px;
}

.doc-info {
    grid-column: 1;
    grid-row: 1 / 3;
    display: flex;
    gap: 12px;
    padding-top: 10px;
}

.doc-thumb {
    width: 80px;
    height: 76px;
    display: grid;
    place-items: center;
    background: #fff;
    border-left: 2px solid #a29e92;
    border-top: 2px solid #a29e92;
}

.doc-thumb i {
    width: 14px;
    height: 6px;
    background: #1c0a10;
}

.doc-labels span {
    display: block;
    margin-bottom: 16px;
}

.doc-settings {
    display: grid;
    grid-template-columns: 91px 1fr;
    grid-template-rows: 42px 43px;
    gap: 5px 0;
    padding-left: 26px;
    align-items: center;
}

.doc-settings,
.properties-body::before {
    grid-column: 2;
    grid-row: 1;
}

.properties-body::before {
    content: "";
    grid-row: 1 / 3;
    width: 2px;
    background: #aaa69b;
}

.settings-row {
    display: flex;
    align-items: center;
    gap: 17px;
}

.settings-row .xp-button {
    width: 188px;
    height: 38px;
}

.settings-row .fit {
    margin-left: 39px;
}

.canvas-swatch {
    width: 45px;
    height: 42px;
}

.canvas-swatch::before {
    content: "";
    display: block;
    width: 37px;
    height: 34px;
}

.row-label svg {
    width: 32px;
    height: 24px;
    margin-left: 44px;
}

.preset {
    width: 459px;
}

.properties-side {
    grid-column: 3;
    grid-row: 1 / 3;
    display: flex;
    flex-direction: column;
    justify-content: space-between;
}

.properties-side svg {
    width: 28px;
    height: 28px;
}

.properties-body hr {
    grid-column: 1 / 3;
    grid-row: 2;
    width: 71%;
    height: 2px;
    margin: 0;
    border: 0;
    background: #b0aba2;
}

/* taskbar */

.taskbar {
    height: 11px;
    flex: none;
    display: flex;
    align-items: flex-end;
    background: linear-gradient(#2459c4, #4a8ef2 4px, #2a67dc);
}

.start {
    width: 189px;
    height: 10px;
    margin-right: 209px;
    background: linear-gradient(#2d7a2d, #6ab869 5px, #409a3f);
    border-radius: 0 8px 0 0;
}

.task {
    width: 314px;
    height: 4px;
    background: #4c97ff;
}

.active-task {
    width: 320px;
    background: #143a9c;
}

.tray {
    width: 257px;
    height: 10px;
    margin-left: auto;
    background: linear-gradient(#0d8be0, #1cb2f4 4px, #129ae8);
    border-left: 2px solid #0b5fae;
}
```
